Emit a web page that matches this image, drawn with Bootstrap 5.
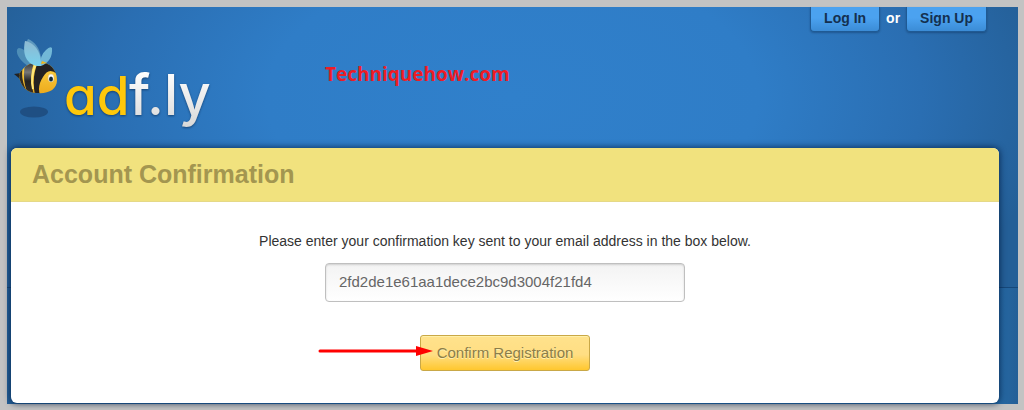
<!DOCTYPE html>
<html lang="en">
<head>
<meta charset="utf-8">
<meta name="viewport" content="width=device-width, initial-scale=1">
<title>Account Confirmation</title>
<link href="https://cdn.jsdelivr.net/npm/bootstrap@5.3.0/dist/css/bootstrap.min.css" rel="stylesheet">
<style>
body { background: #c3c3c3; font-family: "Liberation Sans", Arial, sans-serif; padding: 7px 6px 6px 7px; }
.site {
  min-height: calc(100vh - 13px);
  padding: 0 19px 1px 4px;
  background:
    linear-gradient(#16487a, #16487a) 0 280px / 100% 1px no-repeat,
    radial-gradient(ellipse 54% 300px at 50% 90px, #3080cb 0%, #2f7dc7 45%, #2a6eb2 75%, #245f97 100%) 0 0 / 100% 281px no-repeat,
    linear-gradient(90deg, #245f97, #2d78bf 50%, #266aa5 98%, #245f97);
}
.masthead { height: 141px; }
.brand { margin-top: 27px; display: block; }
.brand svg { display: block; overflow: visible; }
.tagline { font: 700 19px/24px "Open Sans", sans-serif; color: #ee1c25; margin: 55px 0 0 108px; }
.account { margin-right: 12px; gap: 6px; font-size: 14px; font-weight: 700; line-height: 22px; color: #fff; }
.tab {
  display: block; height: 25px; padding: 0 13px; color: #14304f; text-decoration: none;
  background: linear-gradient(#4ba2f0 45%, #3b8cd6); border: 1px solid #1f5a94; border-top: 0;
  border-radius: 0 0 4px 4px; box-shadow: 0 1px 2px rgba(0,20,50,.3);
}
.panel { border: 0; border-radius: 6px; overflow: hidden; box-shadow: 0 0 6px 1px rgba(0,25,60,.7); }
.panel-title { background: #f1e27e; border-bottom: 1px solid #e5d987; height: 54px; padding: 0 21px; }
.panel-title h1 { font-size: 25px; font-weight: 700; line-height: 52px; margin: 0; color: #a39650; }
.panel-body { padding: 28px 16px 32px; font-size: 14px; line-height: 22px; color: #333; }
.key {
  width: 360px; max-width: 100%; height: 39px; margin: 11px 0 33px; padding: 0 13px 2px; font-size: 15px; color: #666;
  border: 1px solid #bfbfbf; border-radius: 4px; background: linear-gradient(#f3f3f3, #fff);
  box-shadow: inset 0 1px 2px rgba(0,0,0,.15);
}
.confirm {
  height: 36px; padding: 0 16px; font-size: 15px; color: #8b7d49; text-shadow: 0 1px 0 #fff0b0;
  border: 1px solid #c9a847; border-radius: 3px; background: linear-gradient(#ffe28c 0, #ffde83 55%, #ffc72e);
  box-shadow: inset 0 1px 0 #fff0a8;
}
.pointer { position: absolute; right: 157px; top: 10px; }
</style>
</head>
<body>
<div class="site">
  <header class="masthead d-flex align-items-start">
    <a class="brand" href="#" aria-label="adf.ly">
      <svg width="206" height="104" viewBox="11 34 206 104">
        <defs>
          <linearGradient id="wing" x1="0" y1="0" x2="0" y2="1"><stop offset="0" stop-color="#8fb9d1"/><stop offset="1" stop-color="#77d1ed"/></linearGradient>
          <linearGradient id="gold" x1="0" y1="0" x2="0" y2="1"><stop offset="0" stop-color="#ffd84a"/><stop offset="1" stop-color="#eba719"/></linearGradient>
          <linearGradient id="dark" x1="0" y1="0" x2="0" y2="1"><stop offset="0" stop-color="#262524"/><stop offset=".35" stop-color="#777"/><stop offset=".6" stop-color="#222"/><stop offset="1" stop-color="#393126"/></linearGradient>
          <linearGradient id="silver" x1="0" y1="70" x2="0" y2="130" gradientUnits="userSpaceOnUse"><stop offset="0" stop-color="#fff"/><stop offset="1" stop-color="#d6d6d6"/></linearGradient>
          <clipPath id="body"><path d="M19 75C23 66 31 62 39 62C50 62 57 70 57 80C57 90 48 94 37 93C27 93 20 86 19 75Z"/></clipPath>
        </defs>
        <ellipse cx="34" cy="112" rx="14" ry="5.500" fill="#1f4f83"/>
        <path d="M28 66C16 58 15 49 19 48C25 49 32 55 37 65Z" fill="#4e8eb7"/>
        <path d="M28 39C26 42 26 48 30 54L39 65L41 58C40 48 34 41 28 39Z" fill="#5d98be"/>
        <path d="M20 79L14 74L21 73Z" fill="#222"/>
        <g clip-path="url(#body)">
          <rect x="18" y="60" width="42" height="36" fill="url(#gold)"/>
          <path d="M18 70L23 66Q20 79 27 92L18 90Z" fill="#302b22"/>
          <path d="M26 61L35 60Q28 76 34 95L28 94Q21 78 26 61Z" fill="url(#dark)"/>
          <path d="M39 60L58 62V75Q49 66 43 77Q37 86 40 95L35 95Q31 76 39 60Z" fill="#242222"/>
          <path d="M36 63Q30 77 33 89" fill="none" stroke="#ffe87a" stroke-width="2"/>
        </g>
        <path d="M41 66Q39 56 46 50Q50 46 52 48Q53 61 41 66Z" fill="#72b8d7"/>
        <path d="M25 41C33 42 42 51 41 66C31 67 21 59 25 41Z" fill="url(#wing)"/>
        <path d="M41 64L42 61L47 63Z" fill="#f4b817"/>
        <ellipse cx="51" cy="78" rx="3" ry="4" fill="#fff" stroke="#d6bd78" stroke-width=".5"/>
        <ellipse cx="51" cy="79" rx="2" ry="2.500" fill="#172c38"/>
        <g font-family="Inter, sans-serif" style="font-feature-settings:'cv11';filter:drop-shadow(0 1px 1px rgba(0,20,50,.5))">
          <text x="64" y="115" font-size="53" font-weight="500" fill="#ffc80b">ad</text>
          <text x="129" y="115" font-size="56" font-weight="500" fill="url(#silver)">f.ly</text>
        </g>
      </svg>
    </a>
    <div class="tagline">Techniquehow.com</div>
    <nav class="account d-flex ms-auto" aria-label="Account">
      <a class="tab" href="#">Log In</a>
      <span>or</span>
      <a class="tab" href="#">Sign Up</a>
    </nav>
  </header>
  <main class="panel card">
    <div class="panel-title"><h1>Account Confirmation</h1></div>
    <form class="panel-body d-flex flex-column align-items-center" onsubmit="return false">
      <label for="key" class="text-center">Please enter your confirmation key sent to your email address in the box below.</label>
      <input id="key" class="key form-control" type="text" value="2fd2de1e61aa1dece2bc9d3004f21fd4">
      <div class="position-relative">
        <button class="confirm btn" type="submit">Confirm Registration</button>
        <svg class="pointer" width="115" height="12" viewBox="0 0 115 12" aria-hidden="true"><path d="M2 6H99" stroke="#f00" stroke-width="3" stroke-linecap="round"/><path d="M98 1L115 6L98 11Z" fill="#f00"/></svg>
      </div>
    </form>
  </main>
</div>
<script src="https://cdn.jsdelivr.net/npm/bootstrap@5.3.0/dist/js/bootstrap.bundle.min.js"></script>
</body>
</html>
